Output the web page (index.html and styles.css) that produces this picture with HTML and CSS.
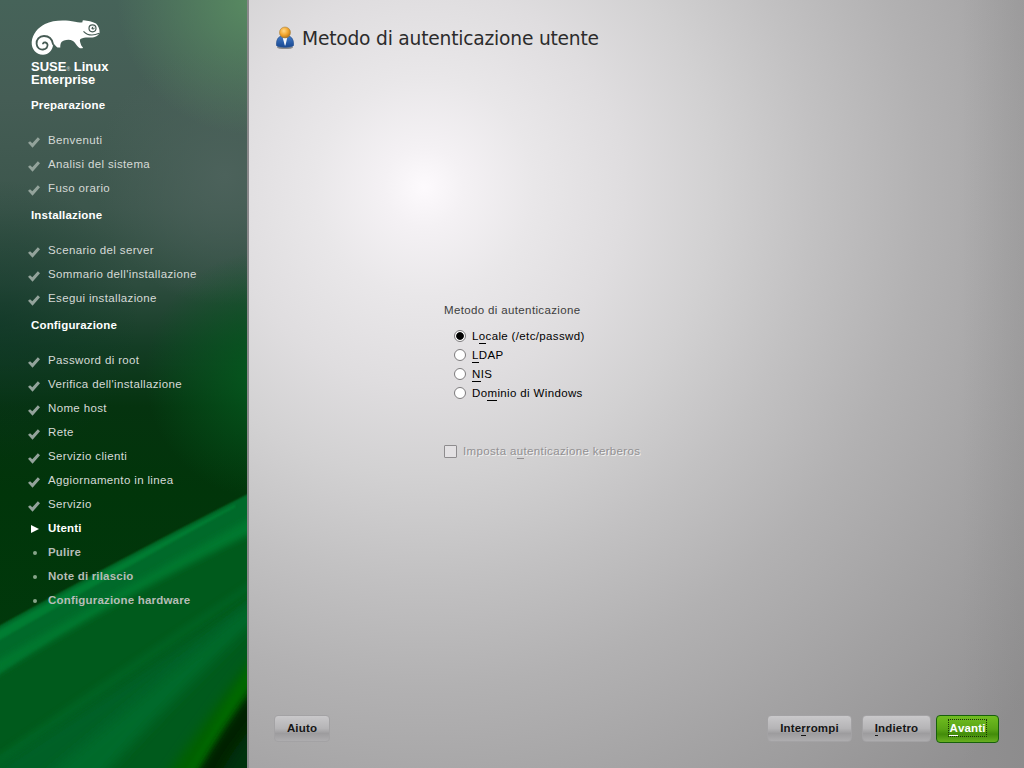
FILE: index.html
```html
<!DOCTYPE html>
<html lang="it">
<head>
<meta charset="utf-8">
<title>Metodo di autenticazione utente</title>
<link rel="stylesheet" href="styles.css">
</head>
<body>
<div class="installer">
  <aside class="sidebar">
    <svg class="backdrop" viewBox="0 0 247 768" preserveAspectRatio="none" aria-hidden="true">
      <defs>
        <linearGradient id="base" x1="0" y1="0" x2="0" y2="1">
          <stop offset="0" stop-color="#466359"/>
          <stop offset=".13" stop-color="#455d55"/>
          <stop offset=".27" stop-color="#3c564c"/>
          <stop offset=".37" stop-color="#2d4c3e"/>
          <stop offset=".45" stop-color="#143d25"/>
          <stop offset=".53" stop-color="#05330f"/>
          <stop offset=".64" stop-color="#01350a"/>
          <stop offset="1" stop-color="#003c0c"/>
        </linearGradient>
        <radialGradient id="corner" gradientUnits="userSpaceOnUse" cx="252" cy="0" r="135">
          <stop offset="0" stop-color="#588a61"/>
          <stop offset="1" stop-color="#588a61" stop-opacity="0"/>
        </radialGradient>
        <radialGradient id="glow" gradientUnits="userSpaceOnUse" cx="270" cy="375" r="125">
          <stop offset="0" stop-color="#045a1e"/>
          <stop offset="1" stop-color="#045a1e" stop-opacity="0"/>
        </radialGradient>
        <radialGradient id="haze" gradientUnits="userSpaceOnUse" cx="225" cy="175" r="130">
          <stop offset="0" stop-color="#4c625b"/>
          <stop offset="1" stop-color="#4c625b" stop-opacity="0"/>
        </radialGradient>
        <radialGradient id="shade" gradientUnits="userSpaceOnUse" cx="0" cy="320" r="140">
          <stop offset="0" stop-color="#0d3526" stop-opacity=".55"/>
          <stop offset="1" stop-color="#0d3526" stop-opacity="0"/>
        </radialGradient>
        <filter id="soft1" x="-20%" y="-20%" width="140%" height="140%"><feGaussianBlur stdDeviation="1"/></filter>
        <filter id="soft3" x="-20%" y="-20%" width="140%" height="140%"><feGaussianBlur stdDeviation="3"/></filter>
        <filter id="soft7" x="-30%" y="-30%" width="160%" height="160%"><feGaussianBlur stdDeviation="6"/></filter>
      </defs>
      <rect width="247" height="768" fill="url(#base)"/>
      <rect width="247" height="768" fill="url(#shade)"/>
      <rect width="247" height="768" fill="url(#haze)"/>
      <rect width="247" height="768" fill="url(#corner)"/>
      <rect width="247" height="768" fill="url(#glow)"/>
      <path d="M-20 637Q120 559 267 485V800H-20Z" fill="#005a1a" filter="url(#soft1)"/>
      <path d="M-20 637Q120 559 267 485V521Q120 589-20 687Z" fill="#006a2a" filter="url(#soft1)"/>
      <path d="M-20 642Q120 564 235 506Q120 570-20 650Z" fill="#007d32" stroke="#007d32" stroke-width="2" filter="url(#soft1)"/>
      <path d="M-20 671Q120 590 267 509V526Q120 596-20 685Z" fill="#00782f" filter="url(#soft3)"/>
      <path d="M-20 776Q130 680 267 590V600Q140 704 40 800Z" fill="#006026" filter="url(#soft7)"/>
      <path d="M30 790Q150 690 267 592V608Q160 710 90 790Z" fill="#006b2b" filter="url(#soft7)"/>
      <path d="M-20 768Q110 676 267 572V578Q120 680-20 778Z" fill="#006c2b" opacity=".55" filter="url(#soft3)"/>
      <path d="M150 800Q215 705 267 640V680L190 800Z" fill="#006000" filter="url(#soft7)"/>
      <path d="M186 776Q224 705 267 634V656L192 780Z" fill="#007a04" opacity=".3" filter="url(#soft3)"/>
      <path d="M191 785Q223 725 275 660V790Z" fill="#002104" filter="url(#soft3)"/>
      <path d="M215 785Q230 750 275 700V790Z" fill="#003011" filter="url(#soft7)"/>
    </svg>
    <div class="brand">
      <svg class="chameleon" viewBox="0 0 70 37" aria-hidden="true">
        <path d="M.7 23C1.500 15 7 8.500 14 5C22 1 34 .500 44 2.800C47 3.600 49 3.800 51.500 3.300Q51 1.500 52.500 1.300C57 1.600 61 2.800 65 4.500C67.500 7 68.700 10 68.600 13.800C67.500 17 63.500 18.800 59 18.500C55 18.300 52 18.700 50 19.800C48.800 20.500 48.600 21.500 49.200 23.200C50 25.500 50.500 27.500 52 28.500L51.500 29.300H49C45.500 27.500 44.500 23.500 42 22C39.500 20.500 36 20.500 33 21.600C30 22.500 29.300 24.800 29.300 28.500H26.500C24.500 27.500 24 25.500 22.700 25L22 25.500C21.800 31.500 17.500 35.700 12 35.700C5 35.700 .300 30 .700 23Z" fill="#fff"/>
        <path d="M22 25C21 19.500 17.200 17 13 17C8.200 17 5.200 20.500 5.600 24.800C6 29 9 30.800 12 30.500C15.200 30.200 17 28 16.500 25.500C16 23.300 13.200 22.700 12 24.500" fill="none" stroke="#465b54" stroke-width="1.800" stroke-linecap="round"/>
        <circle cx="61.500" cy="9.300" r="3.500" fill="#fff" stroke="#465b54" stroke-width="1.200"/>
        <circle cx="62" cy="9.200" r="1.400" fill="#465b54"/>
        <circle cx="62.600" cy="8.700" r=".6" fill="#fff"/>
        <path d="M52.500 12.300C56 16 62 17 68.300 14.300" fill="none" stroke="#465b54" stroke-width="1.100"/>
      </svg>
      <div class="brand-name"><div>SUSE<span class="mark">®</span> Linux</div><div>Enterprise</div></div>
    </div>
    <nav>
      <h2>Preparazione</h2>
      <ul>
        <li class="done"><span>Benvenuti</span></li>
        <li class="done"><span>Analisi del sistema</span></li>
        <li class="done"><span>Fuso orario</span></li>
      </ul>
      <h2>Installazione</h2>
      <ul>
        <li class="done"><span>Scenario del server</span></li>
        <li class="done"><span>Sommario dell'installazione</span></li>
        <li class="done"><span>Esegui installazione</span></li>
      </ul>
      <h2>Configurazione</h2>
      <ul>
        <li class="done"><span>Password di root</span></li>
        <li class="done"><span>Verifica dell'installazione</span></li>
        <li class="done"><span>Nome host</span></li>
        <li class="done"><span>Rete</span></li>
        <li class="done"><span>Servizio clienti</span></li>
        <li class="done"><span>Aggiornamento in linea</span></li>
        <li class="done"><span>Servizio</span></li>
        <li class="current"><span>Utenti</span></li>
        <li class="todo"><span>Pulire</span></li>
        <li class="todo"><span>Note di rilascio</span></li>
        <li class="todo"><span>Configurazione hardware</span></li>
      </ul>
    </nav>
  </aside>
  <main class="content">
    <header>
      <svg class="user-icon" viewBox="0 0 20 24" aria-hidden="true">
        <defs>
          <radialGradient id="face" cx=".4" cy=".35" r=".65">
            <stop offset="0" stop-color="#ffd98a"/><stop offset=".6" stop-color="#f2a52c"/><stop offset="1" stop-color="#b9791f"/>
          </radialGradient>
          <linearGradient id="coat" x1="0" y1="0" x2="0" y2="1">
            <stop offset="0" stop-color="#4279c4"/><stop offset="1" stop-color="#174791"/>
          </linearGradient>
        </defs>
        <ellipse cx="10" cy="21.500" rx="8" ry="1.600" fill="#555" opacity=".6"/>
        <path d="M5 10.500C2 12 1.200 16 1.500 19.500C2.500 21.800 17.500 21.800 18.500 19.500C18.800 16 18 12 15 10.500Z" fill="url(#coat)" stroke="#2b5590" stroke-width=".7"/>
        <path d="M7.800 12H12.200L10.400 19.500H9.800Z" fill="#f4f6fa"/>
        <circle cx="10" cy="6.500" r="5.500" fill="url(#face)" stroke="#a98445" stroke-width=".6"/>
      </svg>
      <h1>Metodo di autenticazione utente</h1>
    </header>
    <form class="auth">
      <div class="legend">Metodo di autenticazione</div>
      <div class="options">
        <label class="radio checked"><i></i><span>L<u>o</u>cale (/etc/passwd)</span></label>
        <label class="radio"><i></i><span><u>L</u>DAP</span></label>
        <label class="radio"><i></i><span><u>N</u>IS</span></label>
        <label class="radio"><i></i><span>Do<u>m</u>inio di Windows</span></label>
      </div>
      <label class="check"><i></i><span>Imposta a<u>u</u>tenticazione kerberos</span></label>
    </form>
    <footer>
      <button class="btn help" type="button">Aiuto</button>
      <button class="btn abort" type="button"><span>Inte<u>r</u>rompi</span></button>
      <button class="btn back" type="button"><span><u>I</u>ndietro</span></button>
      <button class="btn next" type="button"><span><u>A</u>vanti</span></button>
    </footer>
  </main>
</div>
</body>
</html>
```
FILE: styles.css
```css
* { box-sizing: border-box; }
html, body { margin: 0; height: 100%; }
body {
  font: 11.5px/24px "Liberation Sans", Arial, sans-serif;
  letter-spacing: .36px;
  color: #111;
  overflow: hidden;
}
.installer { display: flex; width: 1024px; height: 768px; }

.sidebar {
  position: relative;
  width: 249px;
  border-right: 2px solid #8b898c;
  padding: 19px 0 0 31px;
  color: #d6dad7;
}
.backdrop { position: absolute; left: 0; top: 0; width: 247px; height: 768px; }
.brand, nav { position: relative; }
.brand { height: 74px; color: #fff; }
.chameleon { display: block; width: 70px; height: 37px; }
.brand-name {
  margin-top: 4px;
  font-size: 13px;
  line-height: 13px;
  font-weight: bold;
  letter-spacing: 0;
}
.brand-name div { height: 13px; }
.mark { font-size: 5px; line-height: 0; color: #b9c3bf; letter-spacing: 0; }
h2 {
  margin: 0 0 11px;
  font-size: 11.5px;
  line-height: 24px;
  color: #fff;
  letter-spacing: .17px;
}
ul { list-style: none; margin: 0 0 3px; padding: 0; }
li { display: flex; height: 24px; padding-left: 17px; position: relative; }
li::before { content: ""; position: absolute; }
.done::before {
  left: -3px; top: 9px; width: 12px; height: 11px;
  background: #93a39b;
  clip-path: polygon(0 53%, 17% 38%, 36% 57%, 82% 3%, 100% 20%, 38% 98%);
}
.current, .todo { font-weight: bold; letter-spacing: .19px; }
.current { color: #fff; }
.current::before {
  left: 0; top: 9px; width: 8px; height: 8px;
  background: #fff;
  clip-path: polygon(0 0, 100% 50%, 0 100%);
}
.todo { color: #b6bcb6; }
.todo::before {
  left: 2px; top: 11px; width: 4px; height: 4px;
  border-radius: 50%;
  background: #87a48a;
}

.content {
  flex: 1;
  display: flex;
  flex-direction: column;
  background:
    linear-gradient(90deg, rgba(125,125,125,0) 92%, rgba(125,125,125,.2)),
    radial-gradient(circle at 175px 187px, #fdfafd 0, #f4f1f4 40px, #e9e7e9 110px, #dfdddf 200px, #d2d1d2 290px, #c2c1c2 390px, #b2b1b2 500px, #a4a3a4 620px, #919091 790px);
}
header { display: flex; height: 92px; padding: 26px 0 0 26px; }
.user-icon { width: 20px; height: 24px; }
h1 {
  margin: 1px 0 0 7px;
  font: 18.67px/24px "DejaVu Sans", sans-serif;
  letter-spacing: -.21px;
  color: #2c2c2c;
}
.auth { flex: 1; padding: 206px 0 0 195px; }
.legend { color: #3d3d3d; }
.options { padding: 4px 0 0 10px; }
.radio, .check { display: flex; align-items: center; }
.radio { height: 19px; line-height: 19px; color: #000; }
.radio span { padding-top: 2px; }
.radio i {
  width: 12px; height: 12px; margin-right: 6px;
  border: 1px solid #7d7b7d; border-radius: 50%;
  background: #fff;
}
.radio.checked i { background: radial-gradient(circle, #000 3.4px, #fff 4.3px); }
u { text-decoration: none; box-shadow: 0 1px 0 currentColor; }
.radio u, .check u, .btn u { display: inline-block; line-height: 14px; }
.check {
  height: 20px; margin-top: 39px; line-height: 20px;
  color: #929092; text-shadow: 1px 1px 0 #f2f2f2;
}
.check i {
  width: 13px; height: 13px; margin-right: 6px;
  border: 1px solid #8e8c8e; border-radius: 1px; background: #e3e1e3;
}
footer { display: flex; height: 53px; padding: 0 25px 0 25px; }
.btn {
  height: 27px; padding: 0 0 1px;
  border: 1px solid #a3a2a4; border-radius: 4px;
  background: linear-gradient(#c9c8ca, #b5b4b6 50%, #9d9c9e 70%, #aeadaf);
  font: bold 11.5px/16px "Liberation Sans", Arial, sans-serif;
  letter-spacing: .17px;
  color: #161616;
}
.help { width: 56px; margin-right: auto; }
.abort { width: 85px; margin-right: 10px; }
.back { width: 69px; margin-right: 5px; }
.next {
  width: 63px; height: 28px; padding-bottom: 2px;
  border-color: #17600b;
  background: linear-gradient(#70bd20, #5aa516 50%, #438c0a 70%, #68b020);
  color: #fff;
}
.next span { display: inline-block; outline: 1px dotted #1a3306; line-height: 16px; }
```
